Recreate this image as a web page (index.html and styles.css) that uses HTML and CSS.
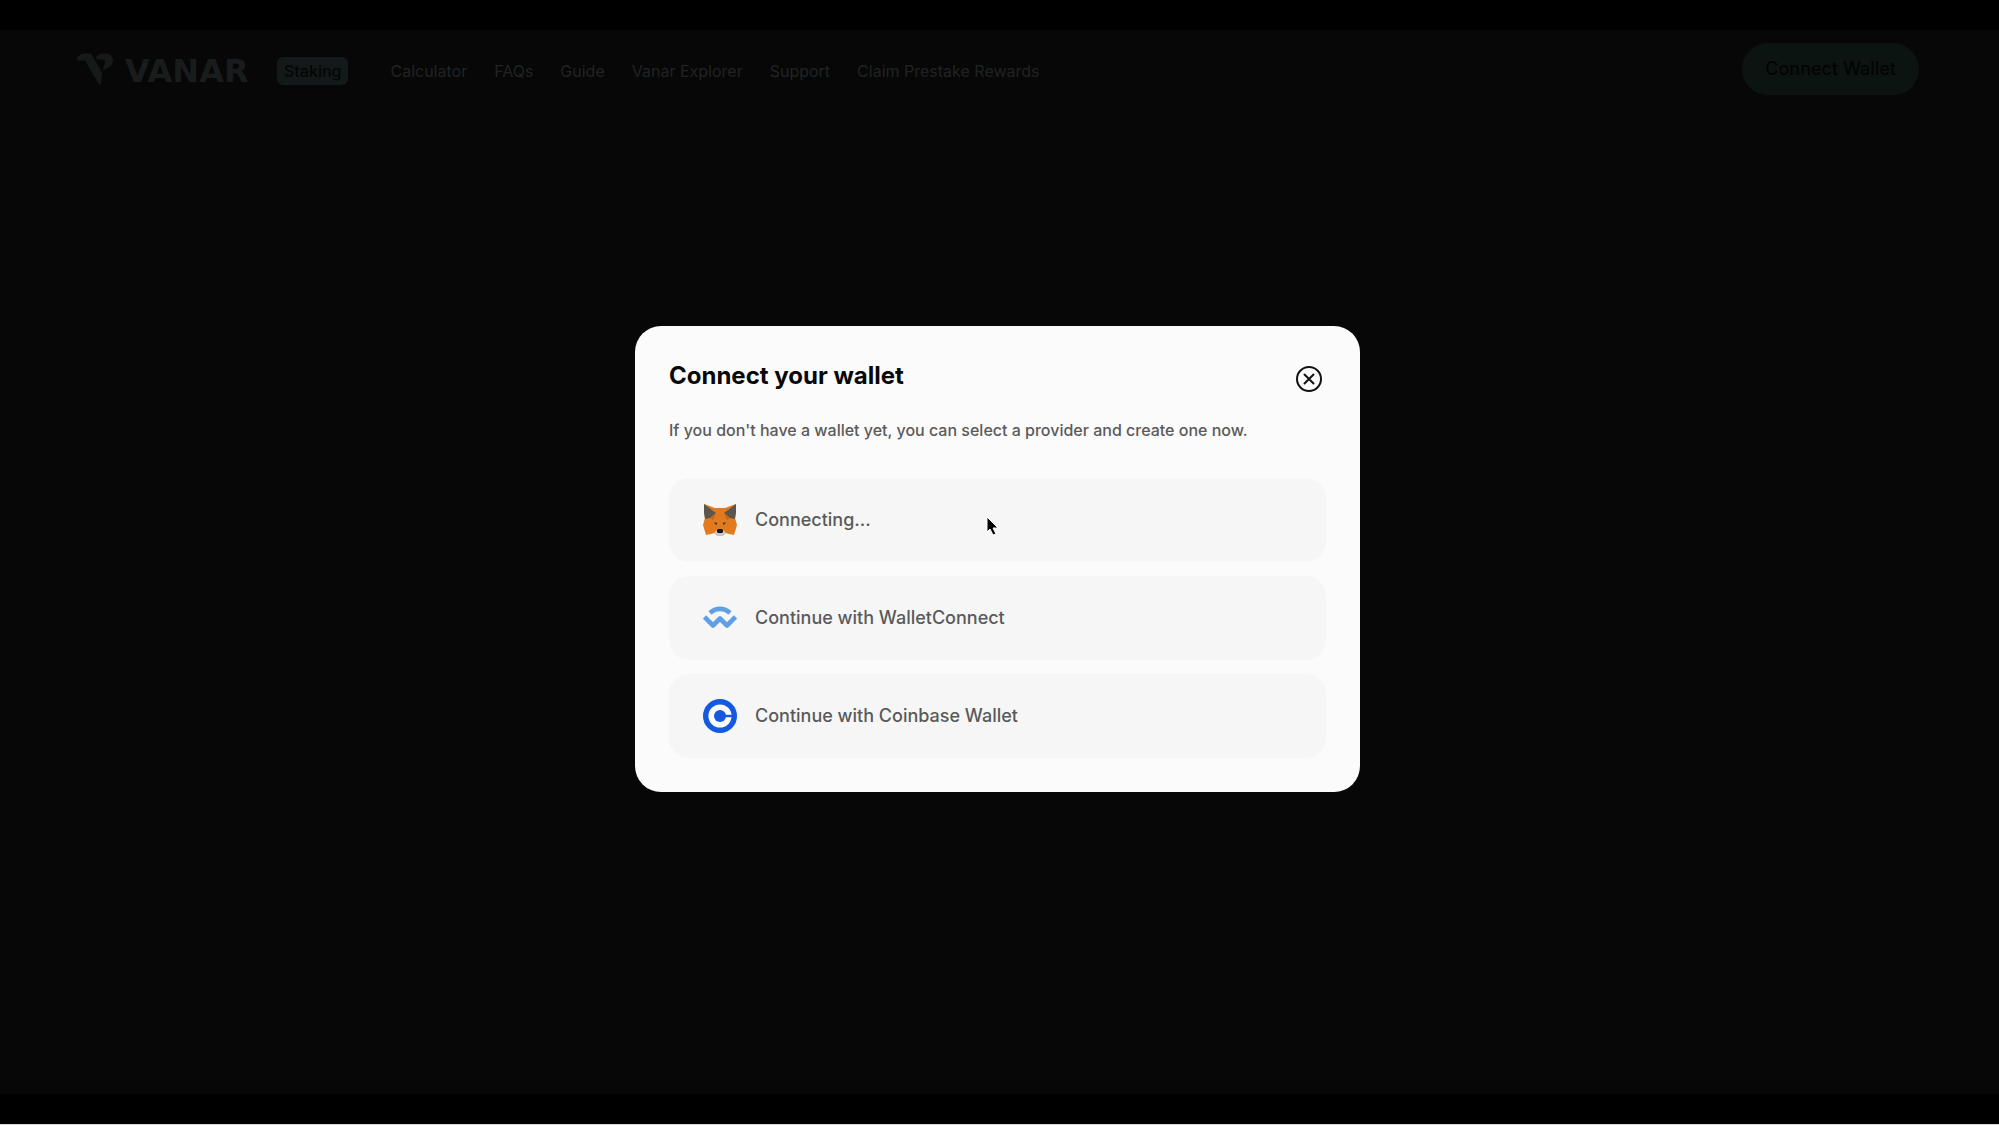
FILE: index.html
```html
<!DOCTYPE html>
<html lang="en">
<head>
<meta charset="utf-8">
<meta name="viewport" content="width=device-width, initial-scale=1">
<title>Vanar Staking</title>
<link rel="stylesheet" href="styles.css">
</head>
<body>
<div class="app">
  <header class="header">
    <a class="brand" href="#">
      <svg class="brand-mark" viewBox="0 0 36 31" aria-hidden="true">
        <path d="M0 5C2 1 5 0 8 0h6l11 19-1 12h-2L8 7H0z"/>
        <path d="M19 4c2-3 4-4 7-4h3c5 0 7 4 7 8-1 4-4 6-8 8l-2 1 1-5c3-3 1-6-2-6h-5z"/>
      </svg>
      <span class="brand-name">VANAR</span>
      <span class="brand-badge">Staking</span>
    </a>
    <nav class="nav">
      <a href="#">Calculator</a>
      <a href="#">FAQs</a>
      <a href="#">Guide</a>
      <a href="#">Vanar Explorer</a>
      <a href="#">Support</a>
      <a href="#">Claim Prestake Rewards</a>
    </nav>
    <button class="connect" type="button">Connect Wallet</button>
  </header>
</div>

<div class="overlay">
  <section class="modal" role="dialog" aria-modal="true" aria-labelledby="modal-title">
    <div class="modal-head">
      <h1 class="modal-title" id="modal-title">Connect your wallet</h1>
      <button class="close" type="button" aria-label="Close">
        <svg viewBox="0 0 26 26" aria-hidden="true">
          <circle cx="13" cy="13" r="12"/>
          <path d="M8.500 8.500l9 9M17.500 8.500l-9 9"/>
        </svg>
      </button>
    </div>
    <p class="modal-text">If you don't have a wallet yet, you can select a provider and create one now.</p>
    <div class="options">
      <button class="option" type="button">
        <svg class="option-icon" viewBox="0 0 34 34" aria-hidden="true">
          <path fill="#e27a20" d="M1 1l11 4h10l11-4-1 14 2 7-3 10-9-2-3 2h-4l-3-2-9 2-3-10 2-7z"/>
          <path fill="#5c564d" d="M1 1l12 9-6 5-5 1-1-6zM33 1l-12 9 6 5 5 1 1-6z"/>
          <path fill="#c96516" d="M7 15l6-5-3 7zM27 15l-6-5 3 7z"/>
          <path fill="#c9c5c4" d="M11 30l3-3h6l3 3-3 3h-6z"/>
          <path fill="#161616" d="M14 27l1-1h4l1 1v2l-1 1h-4l-1-1z"/>
          <path fill="#40382f" d="M11 19l3 1v2l-2-1zM23 19l-3 1v2l2-1z"/>
        </svg>
        <span>Connecting...</span>
        <svg class="pointer" viewBox="0 0 14 22" aria-hidden="true">
          <path d="M1 1v15l3-3 3 6 3-1-3-6h5z"/>
        </svg>
      </button>
      <button class="option" type="button">
        <svg class="option-icon" viewBox="0 0 34 34" aria-hidden="true">
          <path fill="none" stroke="#5f9fe6" stroke-width="4.600" stroke-linejoin="round" d="M7 12c5.500-5.500 14.500-5.500 20 0M1.500 16l8.500 8.500 7-7 7 7 8.500-8.500"/>
        </svg>
        <span>Continue with WalletConnect</span>
      </button>
      <button class="option" type="button">
        <svg class="option-icon" viewBox="0 0 34 34" aria-hidden="true">
          <circle cx="17" cy="17" r="14.300" fill="#fafafa" stroke="#1459e0" stroke-width="5.400"/>
          <circle cx="17" cy="17" r="6" fill="#1459e0"/>
          <path fill="#1459e0" d="M20 15.800h10v2.400H20z"/>
        </svg>
        <span>Continue with Coinbase Wallet</span>
      </button>
    </div>
  </section>
</div>
</body>
</html>
```
FILE: styles.css
```css
* {
  box-sizing: border-box;
}

body {
  display: flex;
  flex-direction: column;
  min-height: 100vh;
  margin: 0;
  padding: 30px 0;
  border-bottom: 1px solid #ddd;
  background: #000;
  font-family: Inter, "Liberation Sans", sans-serif;
}

button {
  border: 0;
  font: inherit;
  cursor: pointer;
}

.app {
  flex: 1;
  background: #070707;
}

.header {
  display: flex;
  align-items: center;
  padding: 13px 80px 13px 77px;
}

.brand {
  display: flex;
  align-items: center;
  gap: 12px;
  padding-top: 4px;
  color: #191c1c;
  text-decoration: none;
}

.brand-mark {
  width: 36px;
  height: 32px;
  margin-bottom: 4px;
  fill: #151a19;
}

.brand-name {
  width: 140px;
  font: 700 32px/32px "DejaVu Sans", sans-serif;
}

.brand-badge {
  padding: 0 7px;
  border-radius: 6px;
  background: #121918;
  color: #040606;
  font-size: 16px;
  font-weight: 500;
  line-height: 28px;
}

.nav {
  display: flex;
  gap: 27px;
  margin-left: 42px;
  padding-top: 4px;
  font-size: 16px;
  line-height: 24px;
}

.nav a {
  color: #212323;
  text-decoration: none;
}

.connect {
  margin-left: auto;
  padding: 0 23px;
  border-radius: 26px;
  background: #0c1412;
  color: #020403;
  font-size: 18px;
  font-weight: 500;
  line-height: 52px;
}

.overlay {
  position: fixed;
  inset: 0;
  display: flex;
  align-items: center;
  justify-content: center;
  padding: 0 4px 7px 0;
}

.modal {
  width: 100%;
  max-width: 725px;
  padding: 34px;
  border-radius: 26px;
  background: #fbfbfb;
}

.modal-head {
  display: flex;
  align-items: flex-end;
  justify-content: space-between;
  padding-right: 4px;
}

.modal-title {
  margin: 0;
  color: #080808;
  font-size: 24px;
  font-weight: 700;
  line-height: 32px;
}

.close {
  padding: 0;
  background: none;
}

.close svg {
  display: block;
  width: 26px;
  height: 26px;
  fill: none;
  stroke: #111;
  stroke-width: 2;
  stroke-linecap: round;
}

.modal-text {
  margin: 26px 0 36px;
  color: #5a5a5a;
  font-size: 16px;
  font-weight: 500;
  line-height: 24px;
}

.options {
  display: grid;
  gap: 14px;
}

.option {
  position: relative;
  display: flex;
  align-items: center;
  gap: 18px;
  padding: 25px 34px;
  border-radius: 20px;
  background: #f6f6f6;
  color: #5a5a5a;
  font-size: 18px;
  font-weight: 500;
  line-height: 34px;
  text-align: left;
}

.option-icon {
  width: 34px;
  height: 34px;
}

.pointer {
  position: absolute;
  top: 38px;
  left: 317px;
  width: 14px;
  height: 22px;
  stroke: #fff;
}
```
